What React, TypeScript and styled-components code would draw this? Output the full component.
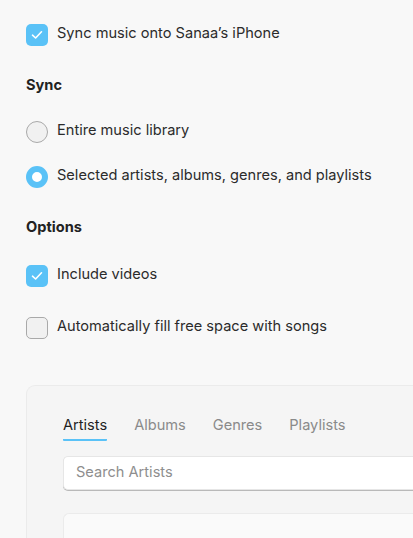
import styled, { createGlobalStyle } from "styled-components";

const GlobalStyle = createGlobalStyle`
  html, body {
    margin: 0;
    padding: 0;
    background: #f8f8f8;
  }
  body {
    font-family: Inter, "Noto Sans", sans-serif;
    color: #2a2a2a;
    -webkit-font-smoothing: antialiased;
  }
`;

const Page = styled.div`
  display: flex;
  flex-direction: column;
  padding: 24px 0 0 26px;
  height: 538px;
  box-sizing: border-box;
  overflow: hidden;
`;

const Row = styled.label<{ $top: number }>`
  display: flex;
  align-items: center;
  gap: 9px;
  height: 22px;
  margin-top: ${({ $top }) => $top}px;
  font-size: 14.6px;
  color: #2b2b2b;
`;

// text sits a touch above the control's centre
const RowText = styled.span`
  line-height: 18px;
  padding-bottom: 4px;
`;

const Heading = styled.div<{ $top: number }>`
  margin-top: ${({ $top }) => $top}px;
  font-size: 14.6px;
  font-weight: 700;
  line-height: 20px;
  color: #222;
`;

const Box = styled.span<{ $checked?: boolean }>`
  width: 22px;
  height: 22px;
  box-sizing: border-box;
  flex-shrink: 0;
  border-radius: 5px;
  display: flex;
  align-items: center;
  justify-content: center;
  background: ${({ $checked }) => ($checked ? "#5ac2f7" : "#f1f1f1")};
  border: ${({ $checked }) => ($checked ? "none" : "1.5px solid #a9a9a9")};
`;

const Radio = styled.span<{ $checked?: boolean }>`
  width: 22px;
  height: 22px;
  box-sizing: border-box;
  flex-shrink: 0;
  border-radius: 50%;
  background: ${({ $checked }) => ($checked ? "#fff" : "#f1f1f1")};
  border: ${({ $checked }) =>
    $checked ? "6px solid #5ac2f7" : "1.5px solid #a9a9a9"};
`;

const Card = styled.div`
  margin-top: 46px;
  flex: 1;
  background: #f5f5f5;
  border: 1px solid #ebebeb;
  border-right: none;
  border-bottom: none;
  border-radius: 9px 0 0 0;
  padding: 28px 0 0 36px;
  display: flex;
  flex-direction: column;
`;

const Tabs = styled.div`
  display: flex;
  gap: 27px;
`;

const Tab = styled.div<{ $active?: boolean }>`
  font-size: 14.6px;
  line-height: 22px;
  padding-bottom: 3px;
  color: ${({ $active }) => ($active ? "#1f1f1f" : "#8a8a8a")};
  border-bottom: 2.5px solid
    ${({ $active }) => ($active ? "#5ac2f7" : "transparent")};
  border-radius: 1px;
`;

const Search = styled.div`
  margin-top: 15px;
  height: 34px;
  box-sizing: border-box;
  background: #fff;
  border: 1px solid #e6e6e6;
  border-right: none;
  border-radius: 5px 0 0 5px;
  box-shadow: 0 1px 0 #b9b9b9;
  display: flex;
  align-items: center;
  padding: 0 0 2px 12px;
  font-size: 14.6px;
  color: #8e8e8e;
`;

const List = styled.div`
  margin-top: 23px;
  flex: 1;
  background: #fafafa;
  border: 1px solid #ebebeb;
  border-right: none;
  border-bottom: none;
  border-radius: 6px 0 0 0;
`;

function Check() {
  return (
    <svg width="12" height="10" viewBox="0 0 12 10" fill="none">
      <path
        d="M1.5 5.2 L4.6 8 L10.5 1.8"
        stroke="#fff"
        strokeWidth="1.6"
        strokeLinecap="round"
        strokeLinejoin="round"
      />
    </svg>
  );
}

export default function App() {
  return (
    <>
      <GlobalStyle />
      <Page>
        <Row $top={0}>
          <Box $checked>
            <Check />
          </Box>
          <RowText>Sync music onto Sanaa’s iPhone</RowText>
        </Row>

        <Heading $top={29}>Sync</Heading>
        <Row $top={26}>
          <Radio />
          <RowText>Entire music library</RowText>
        </Row>
        <Row $top={23}>
          <Radio $checked />
          <RowText>Selected artists, albums, genres, and playlists</RowText>
        </Row>

        <Heading $top={29}>Options</Heading>
        <Row $top={28}>
          <Box $checked>
            <Check />
          </Box>
          <RowText>Include videos</RowText>
        </Row>
        <Row $top={30}>
          <Box />
          <RowText>Automatically fill free space with songs</RowText>
        </Row>

        <Card>
          <Tabs>
            <Tab $active>Artists</Tab>
            <Tab>Albums</Tab>
            <Tab>Genres</Tab>
            <Tab>Playlists</Tab>
          </Tabs>
          <Search>Search Artists</Search>
          <List />
        </Card>
      </Page>
    </>
  );
}
